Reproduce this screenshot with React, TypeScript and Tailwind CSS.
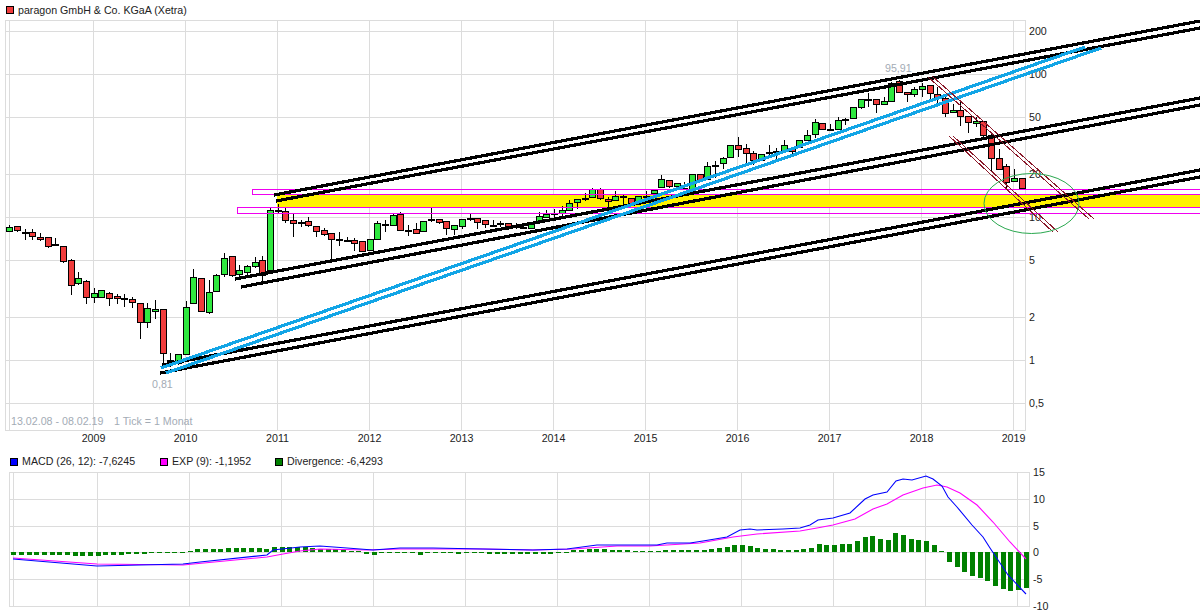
type Candle = [number, number, number, number, "g" | "r" | "d"];

// wickTop, bodyTop, bodyBottom, wickBottom, kind (pixel rows of the monthly candles)
const candles: Candle[] = [
  [225, 227, 231, 232, "g"], [226, 226, 230, 232, "r"], [229, 232, 232, 240, "d"], [229, 232, 236, 240, "r"],
  [233, 237, 239, 241, "r"], [237, 237, 246, 248, "r"], [238, 244, 244, 246, "d"], [246, 246, 261, 263, "r"],
  [259, 260, 285, 295, "r"], [272, 278, 283, 285, "g"], [280, 281, 297, 304, "r"], [288, 293, 297, 303, "g"],
  [290, 290, 297, 297, "g"], [292, 293, 298, 306, "r"], [294, 296, 298, 304, "r"], [294, 298, 298, 307, "d"],
  [297, 299, 302, 308, "r"], [303, 303, 322, 339, "r"], [303, 308, 322, 328, "g"], [300, 309, 311, 319, "g"],
  [309, 309, 353, 367, "r"], [353, 360, 360, 367, "d"], [354, 354, 363, 365, "g"], [301, 307, 354, 354, "g"],
  [269, 277, 303, 304, "g"], [278, 278, 311, 312, "r"], [280, 292, 312, 314, "g"], [274, 275, 291, 292, "g"],
  [253, 258, 274, 277, "g"], [256, 256, 275, 277, "r"], [265, 270, 274, 277, "g"], [265, 266, 272, 277, "g"],
  [257, 262, 266, 268, "g"], [256, 260, 275, 281, "r"], [208, 210, 270, 271, "g"], [204, 210, 210, 214, "d"],
  [208, 211, 220, 223, "r"], [214, 220, 223, 237, "r"], [220, 222, 222, 227, "d"], [217, 221, 225, 227, "r"],
  [226, 226, 231, 237, "r"], [228, 230, 234, 236, "r"], [233, 233, 239, 262, "r"], [232, 239, 239, 246, "d"],
  [237, 240, 240, 242, "d"], [238, 240, 243, 251, "r"], [241, 241, 251, 251, "r"], [239, 239, 250, 251, "g"],
  [221, 223, 239, 239, "g"], [220, 224, 224, 232, "d"], [213, 215, 225, 226, "g"], [212, 214, 230, 231, "r"],
  [225, 230, 230, 236, "d"], [223, 229, 233, 234, "r"], [221, 221, 231, 232, "g"], [207, 219, 219, 222, "d"],
  [219, 219, 222, 224, "r"], [221, 221, 228, 235, "r"], [225, 225, 229, 235, "g"], [219, 219, 226, 229, "g"],
  [214, 218, 218, 221, "d"], [218, 218, 222, 229, "r"], [220, 220, 224, 228, "r"], [220, 225, 225, 227, "d"],
  [221, 223, 223, 227, "d"], [223, 223, 227, 230, "r"], [223, 225, 227, 229, "g"], [224, 227, 227, 229, "d"],
  [222, 223, 228, 229, "g"], [212, 216, 222, 223, "g"], [210, 214, 217, 218, "g"], [209, 213, 213, 217, "d"],
  [206, 210, 213, 217, "g"], [200, 203, 210, 211, "g"], [199, 199, 202, 209, "g"], [193, 198, 198, 201, "d"],
  [188, 189, 197, 198, "g"], [188, 189, 198, 200, "r"], [197, 199, 201, 207, "r"], [191, 196, 200, 201, "g"],
  [195, 196, 196, 207, "d"], [198, 198, 205, 206, "r"], [196, 196, 203, 204, "g"], [191, 196, 196, 199, "d"],
  [190, 190, 193, 194, "g"], [175, 179, 187, 188, "g"], [180, 180, 186, 188, "r"], [183, 183, 186, 189, "g"],
  [182, 188, 188, 190, "d"], [174, 174, 189, 190, "g"], [174, 174, 180, 182, "r"], [162, 166, 179, 180, "g"],
  [161, 165, 165, 178, "d"], [157, 158, 163, 169, "g"], [145, 145, 157, 158, "g"], [137, 145, 149, 157, "r"],
  [144, 148, 153, 165, "r"], [151, 153, 160, 165, "r"], [154, 154, 160, 160, "g"], [145, 152, 152, 155, "d"],
  [148, 151, 152, 160, "r"], [140, 145, 151, 152, "g"], [148, 148, 151, 155, "r"], [140, 140, 147, 148, "g"],
  [130, 135, 140, 141, "g"], [119, 122, 134, 138, "g"], [123, 123, 129, 130, "r"], [124, 129, 129, 130, "d"],
  [117, 120, 129, 130, "g"], [118, 119, 119, 125, "d"], [107, 107, 118, 119, "g"], [99, 99, 107, 109, "g"],
  [93, 99, 99, 107, "d"], [99, 99, 104, 113, "r"], [97, 101, 104, 105, "g"], [82, 83, 101, 102, "g"],
  [80, 81, 92, 93, "r"], [92, 92, 94, 102, "r"], [87, 89, 94, 97, "g"], [83, 86, 89, 97, "g"],
  [85, 85, 93, 100, "r"], [87, 94, 98, 107, "r"], [97, 98, 113, 117, "r"], [104, 110, 112, 113, "g"],
  [102, 110, 116, 126, "r"], [116, 116, 122, 133, "r"], [117, 121, 123, 127, "g"], [121, 121, 135, 137, "r"],
  [133, 135, 158, 172, "r"], [149, 158, 169, 170, "r"], [164, 166, 182, 188, "r"], [169, 178, 181, 182, "g"],
  [178, 178, 188, 189, "r"],
];

// divergence bar height in px above (+) or below (-) the zero line, one per month
const divergence = [
  -3, -3, -3, -3, -3, -3, -3, -3, -4, -4, -4, -4, -3, -3, -3, -2, -2, -1.5, -0.7, -0.7, -0.7, -0.7, -0.7,
  0.7, 3, 3, 3, 3, 4, 4, 4, 4, 4, 3, 5, 5, 5, 5, 5, 4, 3, 3, 3, 2, 1, 1, -2, -3, -1, -0.7, -0.7,
  -0.7, -0.7, -3, -0.7, -0.7, -0.7, -0.7, -2, -0.7, -0.7, -0.7, -2, -2, -2, -2, -2, -2, -2, -2, -2,
  -0.7, -0.7, 1.5, 2, 3, 3, 3, 2, 2, 2, 0.7, 0.7, 0.7, 0.7, 2, 2, 2, 2, 2, 2, 3, 4, 5, 7, 7, 6, 4, 3, 3,
  2, 2, 2, 2.7, 4, 7.5, 6.5, 6.5, 7.5, 7.5, 10.5, 14.5, 15.5, 13, 11.5, 18.5, 16.5, 12.5, 11.5, 10.5,
  6.5, 0.7, -9.5, -14.5, -19.5, -23.5, -25.5, -28.5, -33.5, -36.5, -38.5, -37.5, -35.5,
];

const macdLine =
  "13,559 97,566 183,564 200,562 267,555 273,550 300,547 320,546 347,548 373,550 400,548 433,548 483,549 533,550 567,549 597,545 630,545 657,545 667,543 690,543 703,541 727,537 740,530 750,529 757,530 783,529 800,528 810,525 818,520 833,518 850,513 865,499 873,495 887,492 896,481 903,479 912,480 926,476 933,479 942,486 948,497 957,507 972,525 983,537 990,548 1008,575 1026,594";
const expLine =
  "13,558 97,564 183,565 267,557 283,554 300,551 320,549 367,550 400,549 483,549 533,550 573,549 617,546 650,546 700,543 733,537 757,534 800,531 817,528 833,525 855,519 873,509 887,504 903,495 923,488 937,485 947,487 960,493 977,505 993,522 1010,542 1026,559";

const years = [2009, 2010, 2011, 2012, 2013, 2014, 2015, 2016, 2017, 2018, 2019];
const priceGrid: [number, string][] = [
  [31, "200"], [74, "100"], [117, "50"], [174, "20"], [217, "10"], [260, "5"], [317, "2"], [360, "1"], [403, "0,5"],
];
const macdGrid: [number, string][] = [
  [472, "15"], [499, "10"], [526, "5"], [552, "0"], [579, "-5"], [606, "-10"],
];

const trendLines: [number, number, number, number][] = [
  [274, 195, 1200, 21], [276, 201, 1200, 28],
  [235, 279, 1200, 98], [241, 287, 1200, 105],
  [162, 365, 1200, 170], [160, 373, 1200, 177],
];
const blueLines: [number, number, number, number][] = [
  [161, 368, 1085, 47], [166, 373, 1101, 48],
];
const redLines: [number, number, number, number][] = [
  [932, 76, 1094, 219], [928, 77, 1089, 219],
  [953, 136, 1058, 232], [949, 136, 1053, 232],
];

function Candles() {
  return (
    <g shapeRendering="crispEdges">
      {candles.map(([top, bodyTop, bodyBottom, bottom, kind], i) => {
        const x = Math.round(9.3 + 7.67 * i);
        return (
          <g key={i}>
            <rect x={x} y={top} width={1} height={bottom - top} fill="#000" />
            {kind === "d" ? (
              <rect x={x - 3} y={bodyTop} width={7} height={2} fill="#000" />
            ) : (
              <rect
                x={x - 2.5}
                y={bodyTop + 0.5}
                width={6}
                height={bodyBottom - bodyTop}
                fill={kind === "g" ? "#2fe83f" : "#f03c3c"}
                stroke="#000"
              />
            )}
          </g>
        );
      })}
    </g>
  );
}

function PriceChart() {
  return (
    <svg width={1200} height={433} viewBox="0 20 1200 433" className="block">
      <g stroke="#dcdcdc" shapeRendering="crispEdges">
        <rect x={5.5} y={20.5} width={1020} height={410} fill="none" />
        <line x1={9.5} y1={20} x2={9.5} y2={431} />
        {years.map((_, i) => (
          <line key={i} x1={93.5 + 92 * i} y1={20} x2={93.5 + 92 * i} y2={431} />
        ))}
        {priceGrid.map(([y]) => (
          <line key={y} x1={5} y1={y + 0.5} x2={1026} y2={y + 0.5} />
        ))}
      </g>

      <g fontSize={10.67} fill="#222">
        {priceGrid.map(([y, label]) => (
          <text key={y} x={1029} y={y + 4}>{label}</text>
        ))}
        {years.map((year, i) => (
          <text key={year} x={93.5 + 92 * i} y={442} textAnchor="middle">{year}</text>
        ))}
      </g>
      <g fontSize={10.67} fill="#a3abb5">
        <text x={11} y={425}>13.02.08 - 08.02.19</text>
        <text x={114} y={425}>1 Tick = 1 Monat</text>
        <text x={152} y={388}>0,81</text>
        <text x={885} y={72}>95,91</text>
      </g>

      <rect x={277} y={195} width={923} height={13} fill="#fff200" />
      <Candles />

      <g fill="none" stroke="#f000f0" shapeRendering="crispEdges">
        <path d="M1200 189.5H252.5V194.5H1200" />
        <path d="M1200 207.5H237.5V213.5H1200" />
      </g>

      <g shapeRendering="crispEdges">
        {trendLines.map(([x1, y1, x2, y2]) => (
          <line key={`${x1}-${y1}`} x1={x1} y1={y1} x2={x2} y2={y2} stroke="#000" strokeWidth={3.2} />
        ))}
        {blueLines.map(([x1, y1, x2, y2]) => (
          <line key={`${x1}-${y1}`} x1={x1} y1={y1} x2={x2} y2={y2} stroke="#12a5e6" strokeWidth={3.2} />
        ))}
        {redLines.map(([x1, y1, x2, y2]) => (
          <line key={`${x1}-${y1}`} x1={x1} y1={y1} x2={x2} y2={y2} stroke="#8b1a2b" strokeWidth={1} />
        ))}
      </g>
      <ellipse cx={1031.5} cy={203.5} rx={47.5} ry={30} fill="none" stroke="#2aa84f" />
    </svg>
  );
}

function MacdChart() {
  return (
    <svg width={1200} height={145} viewBox="0 467 1200 145" className="block">
      <g stroke="#dcdcdc" shapeRendering="crispEdges">
        <line x1={9.5} y1={472} x2={9.5} y2={607} />
        <line x1={13.5} y1={472} x2={13.5} y2={607} />
        <line x1={1029.5} y1={472} x2={1029.5} y2={607} />
        {years.map((_, i) => (
          <line key={i} x1={97.5 + 92 * i} y1={472} x2={97.5 + 92 * i} y2={607} />
        ))}
        {macdGrid.map(([y]) => (
          <line key={y} x1={9} y1={y + 0.5} x2={1030} y2={y + 0.5} />
        ))}
      </g>
      <g fontSize={10.67} fill="#222">
        {macdGrid.map(([y, label]) => (
          <text key={y} x={1033} y={y + 4}>{label}</text>
        ))}
      </g>
      <g fill="#008000" shapeRendering="crispEdges">
        {divergence.map((value, i) => {
          const x = Math.round(13.3 + 7.67 * i) - 2;
          const height = Math.max(1, Math.round(Math.abs(value)));
          return <rect key={i} x={x} y={value > 0 ? 552 - height : 552} width={5} height={height} />;
        })}
      </g>
      <polyline points={expLine} fill="none" stroke="#ff00ff" strokeWidth={1.1} />
      <polyline points={macdLine} fill="none" stroke="#0000ff" strokeWidth={1.1} />
    </svg>
  );
}

function LegendItem({ color, label, className }: { color: string; label: string; className: string }) {
  return (
    <div className={`flex items-center gap-[4px] ${className}`}>
      <span className={`size-2 border border-black ${color}`} />
      <span>{label}</span>
    </div>
  );
}

export default function App() {
  return (
    <div className="h-[612px] w-[1200px] overflow-hidden bg-white text-[10.67px] leading-none text-[#222] [font-family:'Liberation_Sans',Arial,sans-serif]">
      <div className="flex h-5 items-center gap-[4px] pl-[6px]">
        <span className="size-2 border border-black bg-[#f03c3c]" />
        <span>paragon GmbH &amp; Co. KGaA (Xetra)</span>
      </div>
      <PriceChart />
      <div className="flex h-[14px] items-end pl-[10px]">
        <LegendItem color="bg-[#0000ff]" label="MACD (26, 12): -7,6245" className="w-[150px]" />
        <LegendItem color="bg-[#ff00ff]" label="EXP (9): -1,1952" className="w-[115px]" />
        <LegendItem color="bg-[#008000]" label="Divergence: -6,4293" className="" />
      </div>
      <MacdChart />
    </div>
  );
}
